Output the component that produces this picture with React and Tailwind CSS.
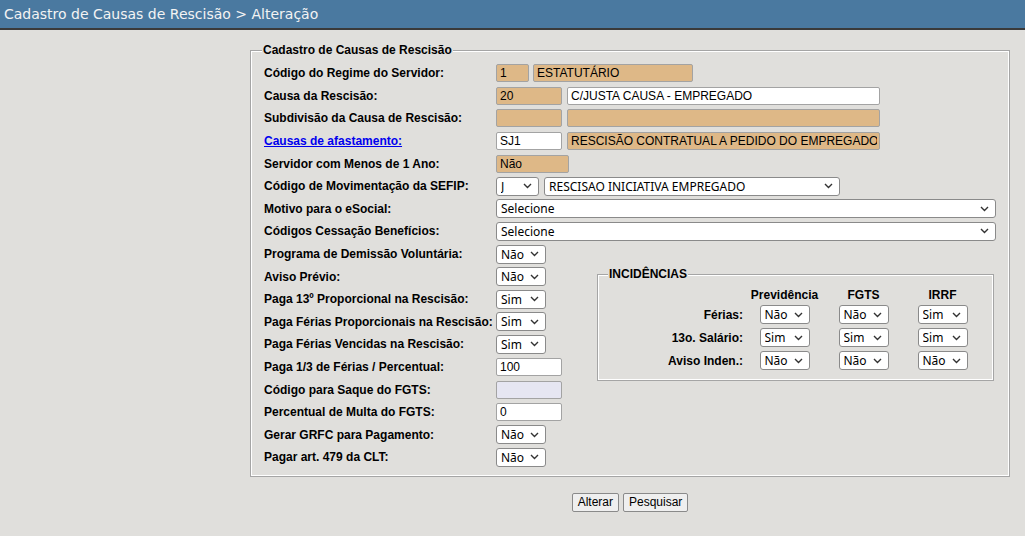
import React from "react";

const TAN = "bg-[#deb887]";

function Field({ w, value = "", tone = "bg-white" }) {
  return (
    <input
      readOnly
      defaultValue={value}
      className={`${w} ${tone} h-[18px] border border-[#a3a3a3] rounded-[2px] pl-[3px] pr-[2px] text-[12px] font-normal text-black outline-none font-['Liberation_Sans',Arial,sans-serif]`}
    />
  );
}

function Chevron() {
  return (
    <svg width="9" height="6" viewBox="0 0 9 6" className="pointer-events-none absolute right-[7px] top-1/2 -translate-y-1/2">
      <polyline points="1,1 4.5,4.5 8,1" fill="none" stroke="#333" strokeWidth="1.4" />
    </svg>
  );
}

function Select({ w = "w-[50px]", value, options }) {
  const opts = options || [value];
  return (
    <div className={`relative ${w} h-[19px]`}>
      <select
        defaultValue={value}
        className="appearance-none w-full h-full bg-white border border-[#8a8a8a] rounded-[3px] pl-[4px] pr-[18px] text-[12px] font-normal leading-[17px] text-black outline-none font-['Noto_Sans',sans-serif]"
      >
        {opts.map((o) => (
          <option key={o}>{o}</option>
        ))}
      </select>
      <Chevron />
    </div>
  );
}

const SN = ["Sim", "Não"];

function Row({ label, children, link }) {
  return (
    <div className="flex items-center h-[22.6px]">
      <div className="w-[232px] font-bold">
        {link ? (
          <a href="#" className="text-[#0000ee] underline">
            {label}
          </a>
        ) : (
          label
        )}
      </div>
      <div className="flex items-center gap-[5px]">{children}</div>
    </div>
  );
}

function Box({ title, className, legendClass, children }) {
  return (
    <fieldset className={`border border-[#a5a5a5] shadow-[inset_0_0_0_1px_#fff] ${className}`}>
      <legend className={`font-bold text-[12px] bg-[#e0dfdc] ${legendClass}`}>{title}</legend>
      {children}
    </fieldset>
  );
}

function Cell({ children }) {
  return <div className="flex justify-center">{children}</div>;
}

export default function App() {
  return (
    <div className="min-h-screen bg-[#e0dfdc] text-[12px] text-black font-['Liberation_Sans',Arial,sans-serif]">
      <div className="h-[30px] bg-[#4a79a0] border-b-2 border-[#3a3a3a] flex items-center pl-[4px] text-[14px] text-[#f3f3f3] font-['DejaVu_Sans',sans-serif]">
        Cadastro de Causas de Rescisão &gt; Alteração
      </div>

      <div className="pl-[250px] pt-[11px]">
        <Box
          title="Cadastro de Causas de Rescisão"
          className="w-[760px] pl-[11px] pb-[7px]"
          legendClass="px-[1px]"
        >
          <div className="pl-[2px] pt-[3px]">
            <Row label="Código do Regime do Servidor:">
              <div className="flex gap-[4px]">
                <Field w="w-[33px]" value="1" tone={TAN} />
                <Field w="w-[160px]" value="ESTATUTÁRIO" tone={TAN} />
              </div>
            </Row>
            <Row label="Causa da Rescisão:">
              <Field w="w-[66px]" value="20" tone={TAN} />
              <Field w="w-[313px]" value="C/JUSTA CAUSA - EMPREGADO" />
            </Row>
            <Row label="Subdivisão da Causa de Rescisão:">
              <Field w="w-[66px]" tone={TAN} />
              <Field w="w-[313px]" tone={TAN} />
            </Row>
            <Row label="Causas de afastamento:" link>
              <Field w="w-[66px]" value="SJ1" />
              <Field w="w-[313px]" value="RESCISÃO CONTRATUAL A PEDIDO DO EMPREGADO" tone={TAN} />
            </Row>
            <Row label="Servidor com Menos de 1 Ano:">
              <Field w="w-[73px]" value="Não" tone={TAN} />
            </Row>
            <Row label="Código de Movimentação da SEFIP:">
              <Select w="w-[43px]" value="J" />
              <Select w="w-[296px]" value="RESCISAO INICIATIVA EMPREGADO" />
            </Row>
            <Row label="Motivo para o eSocial:">
              <Select w="w-[500px]" value="Selecione" />
            </Row>
            <Row label="Códigos Cessação Benefícios:">
              <Select w="w-[500px]" value="Selecione" />
            </Row>
            <Row label="Programa de Demissão Voluntária:">
              <Select value="Não" options={SN} />
            </Row>

            <div className="flex items-start">
              <div className="w-[333px] flex flex-col">
                <Row label="Aviso Prévio:">
                  <Select value="Não" options={SN} />
                </Row>
                <Row label="Paga 13º Proporcional na Rescisão:">
                  <Select value="Sim" options={SN} />
                </Row>
                <Row label="Paga Férias Proporcionais na Rescisão:">
                  <Select value="Sim" options={SN} />
                </Row>
                <Row label="Paga Férias Vencidas na Rescisão:">
                  <Select value="Sim" options={SN} />
                </Row>
                <Row label="Paga 1/3 de Férias / Percentual:">
                  <Field w="w-[66px]" value="100" />
                </Row>
                <Row label="Código para Saque do FGTS:">
                  <Field w="w-[66px]" tone="bg-[#e6e6f2]" />
                </Row>
                <Row label="Percentual de Multa do FGTS:">
                  <Field w="w-[66px]" value="0" />
                </Row>
                <Row label="Gerar GRFC para Pagamento:">
                  <Select value="Não" options={SN} />
                </Row>
                <Row label="Pagar art. 479 da CLT:">
                  <Select value="Não" options={SN} />
                </Row>
              </div>

              <Box
                title="INCIDÊNCIAS"
                className="w-[397px] pl-[10px] pb-[8px]"
                legendClass="px-[1px]"
              >
                <div className="grid grid-cols-[137px_79px_79px_79px] grid-rows-[16px_23px_23px_23px] items-center font-bold mt-[4px]">
                  <div />
                  <div className="text-center">Previdência</div>
                  <div className="text-center">FGTS</div>
                  <div className="text-center">IRRF</div>

                  <div className="text-right pr-[2px]">Férias:</div>
                  <Cell><Select value="Não" options={SN} /></Cell>
                  <Cell><Select value="Não" options={SN} /></Cell>
                  <Cell><Select value="Sim" options={SN} /></Cell>

                  <div className="text-right pr-[2px]">13o. Salário:</div>
                  <Cell><Select value="Sim" options={SN} /></Cell>
                  <Cell><Select value="Sim" options={SN} /></Cell>
                  <Cell><Select value="Sim" options={SN} /></Cell>

                  <div className="text-right pr-[2px]">Aviso Inden.:</div>
                  <Cell><Select value="Não" options={SN} /></Cell>
                  <Cell><Select value="Não" options={SN} /></Cell>
                  <Cell><Select value="Não" options={SN} /></Cell>
                </div>
              </Box>
            </div>
          </div>
        </Box>

        <div className="w-[760px] flex justify-center gap-[4px] mt-[16px]">
          <button className="h-[19px] px-[5px] bg-[#efefef] border border-[#8a8a8a] rounded-[2px] text-[12px] leading-none">
            Alterar
          </button>
          <button className="h-[19px] px-[5px] bg-[#efefef] border border-[#8a8a8a] rounded-[2px] text-[12px] leading-none">
            Pesquisar
          </button>
        </div>
      </div>
    </div>
  );
}
